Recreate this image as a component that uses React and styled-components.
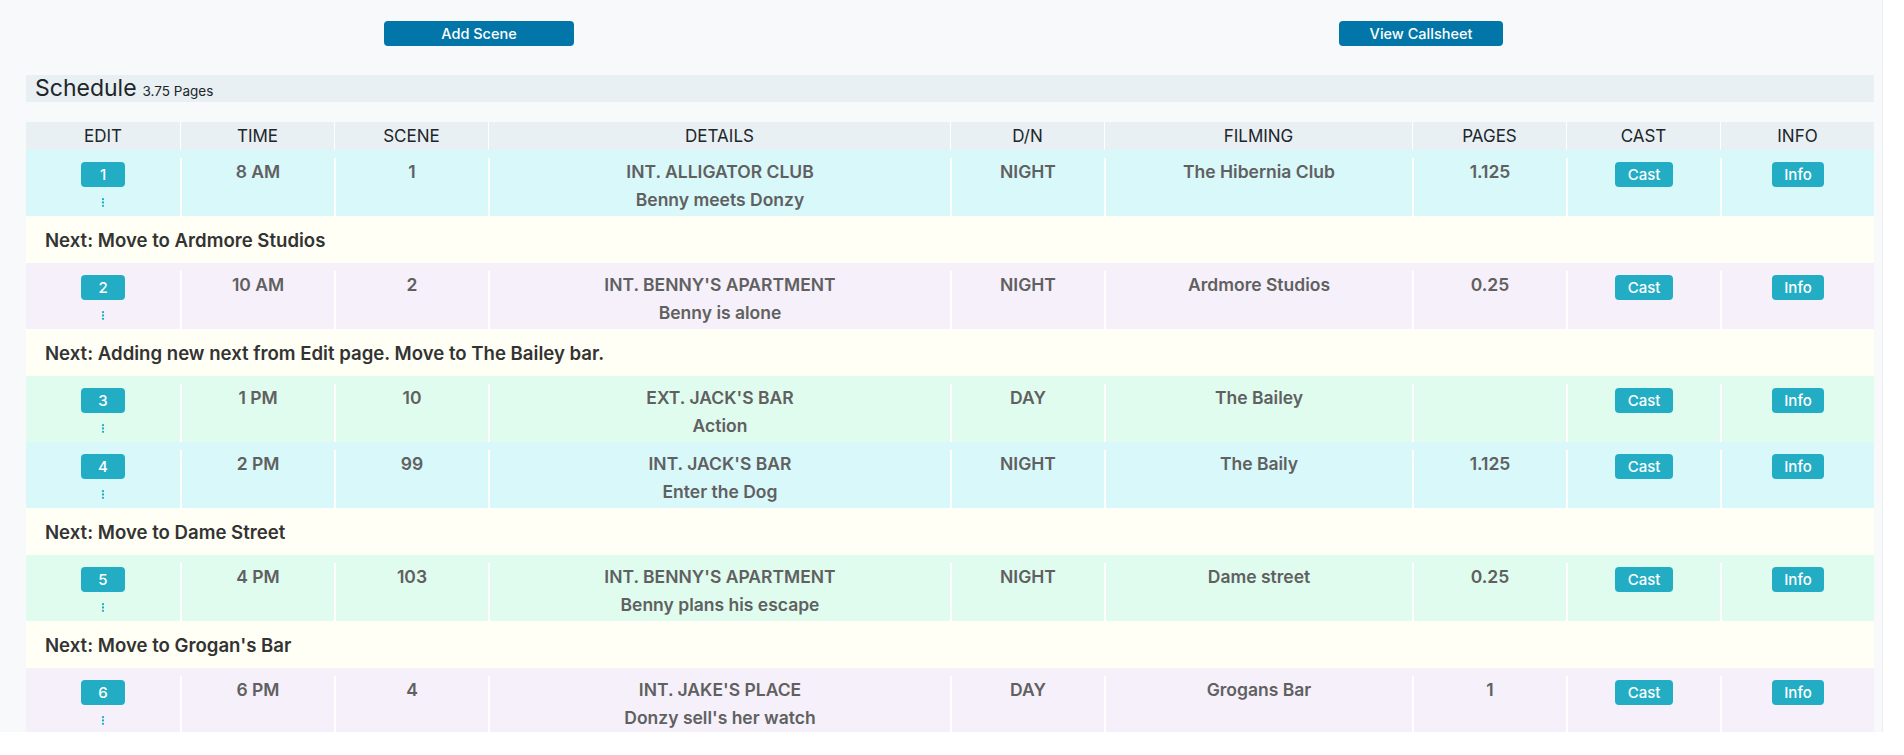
import React from 'react';
import styled, { createGlobalStyle } from 'styled-components';

const GlobalStyle = createGlobalStyle`
  body {
    margin: 0;
    background: #ffffff;
    font-family: Inter, "Noto Sans", sans-serif;
  }
  * { box-sizing: border-box; }
`;

const COLS = '154px 154px 154px 462px 154px 308px 154px 154px 154px';

const ROW_COLORS = {
  cyan: '#d9f8fa',
  lilac: '#f6f0fa',
  mint: '#dffcef',
};

const Page = styled.div`
  width: 1883px;
  height: 732px;
  overflow: hidden;
  background: #f8f9fa;
  border-right: 1px solid #eceef0;
`;

const TopBar = styled.div`
  display: grid;
  grid-template-columns: 942px 942px;
  margin-left: 8px;
  padding-top: 21px;
`;

const TopCell = styled.div`
  display: flex;
  justify-content: center;
`;

const PrimaryButton = styled.button`
  width: ${props => props.w}px;
  height: 25px;
  border: none;
  border-radius: 4px;
  background: #0276a8;
  color: #fff;
  font-family: inherit;
  font-size: 14.5px;
  font-weight: 500;
  cursor: pointer;
`;

const Content = styled.div`
  margin: 29px 0 0 26px;
  width: 1848px;
`;

const SectionBar = styled.div`
  height: 27px;
  background: #e8f0f3;
  display: flex;
  align-items: baseline;
  padding-left: 9px;
  gap: 6px;
  color: #212529;
`;

const SectionTitle = styled.span`
  font-size: 23px;
  line-height: 27px;
`;

const SectionMeta = styled.span`
  font-size: 13.5px;
`;

const Table = styled.div`
  margin-top: 20px;
`;

const HeaderRow = styled.div`
  display: grid;
  grid-template-columns: ${COLS};
  height: 28px;
  background: #e8f0f3;
`;

const HeaderCell = styled.div`
  display: flex;
  align-items: center;
  justify-content: center;
  font-size: 17px;
  color: #212529;
  border-left: ${props => (props.first ? 'none' : '1px solid #ffffff')};
`;

const SceneRow = styled.div`
  display: grid;
  grid-template-columns: ${COLS};
  height: 66px;
  padding-top: 8px;
  background: ${props => ROW_COLORS[props.tone]};
`;

const Cell = styled.div`
  display: flex;
  flex-direction: column;
  align-items: center;
  text-align: center;
  font-size: 17.5px;
  font-weight: 600;
  line-height: 28px;
  color: #606060;
  border-left: ${props => (props.first ? 'none' : '2px solid #ffffff')};
`;

const SmallButton = styled.button`
  height: 25px;
  min-width: ${props => props.w || 0}px;
  margin-top: 4px;
  padding: 0 12px;
  border: none;
  border-radius: 4px;
  background: #23adc4;
  color: #fff;
  font-family: inherit;
  font-size: 15px;
  font-weight: 500;
  line-height: 25px;
  cursor: pointer;
`;

const Handle = styled.svg`
  margin-top: 11px;
  display: block;
`;

const NextRow = styled.div`
  height: 47px;
  display: flex;
  align-items: center;
  padding-left: 19px;
  background: #fffff5;
  font-size: 18.6px;
  font-weight: 600;
  color: #333333;
`;

const headers = ['EDIT', 'TIME', 'SCENE', 'DETAILS', 'D/N', 'FILMING', 'PAGES', 'CAST', 'INFO'];

const rows = [
  { n: 1, time: '8 AM', scene: '1', set: 'INT. ALLIGATOR CLUB', desc: 'Benny meets Donzy', dn: 'NIGHT', loc: 'The Hibernia Club', pages: '1.125', tone: 'cyan', next: 'Next: Move to Ardmore Studios' },
  { n: 2, time: '10 AM', scene: '2', set: "INT. BENNY'S APARTMENT", desc: 'Benny is alone', dn: 'NIGHT', loc: 'Ardmore Studios', pages: '0.25', tone: 'lilac', next: 'Next: Adding new next from Edit page. Move to The Bailey bar.' },
  { n: 3, time: '1 PM', scene: '10', set: "EXT. JACK'S BAR", desc: 'Action', dn: 'DAY', loc: 'The Bailey', pages: '', tone: 'mint' },
  { n: 4, time: '2 PM', scene: '99', set: "INT. JACK'S BAR", desc: 'Enter the Dog', dn: 'NIGHT', loc: 'The Baily', pages: '1.125', tone: 'cyan', next: 'Next: Move to Dame Street' },
  { n: 5, time: '4 PM', scene: '103', set: "INT. BENNY'S APARTMENT", desc: 'Benny plans his escape', dn: 'NIGHT', loc: 'Dame street', pages: '0.25', tone: 'mint', next: "Next: Move to Grogan's Bar" },
  { n: 6, time: '6 PM', scene: '4', set: "INT. JAKE'S PLACE", desc: "Donzy sell's her watch", dn: 'DAY', loc: 'Grogans Bar', pages: '1', tone: 'lilac' },
];

function DragHandle() {
  return (
    <Handle width="4" height="9" viewBox="0 0 4 9">
      <circle cx="2" cy="1.2" r="1.15" fill="#23adc4" />
      <circle cx="2" cy="4.5" r="1.15" fill="#23adc4" />
      <circle cx="2" cy="7.8" r="1.15" fill="#23adc4" />
    </Handle>
  );
}

function App() {
  return (
    <>
      <GlobalStyle />
      <Page>
        <TopBar>
          <TopCell>
            <PrimaryButton w={190}>Add Scene</PrimaryButton>
          </TopCell>
          <TopCell>
            <PrimaryButton w={164}>View Callsheet</PrimaryButton>
          </TopCell>
        </TopBar>
        <Content>
          <SectionBar>
            <SectionTitle>Schedule</SectionTitle>
            <SectionMeta>3.75 Pages</SectionMeta>
          </SectionBar>
          <Table>
            <HeaderRow>
              {headers.map((h, i) => (
                <HeaderCell key={h} first={i === 0}>{h}</HeaderCell>
              ))}
            </HeaderRow>
            {rows.map(r => (
              <React.Fragment key={r.n}>
                <SceneRow tone={r.tone}>
                  <Cell first>
                    <SmallButton w={44}>{r.n}</SmallButton>
                    <DragHandle />
                  </Cell>
                  <Cell>{r.time}</Cell>
                  <Cell>{r.scene}</Cell>
                  <Cell>
                    <span>{r.set}</span>
                    <span>{r.desc}</span>
                  </Cell>
                  <Cell>{r.dn}</Cell>
                  <Cell>{r.loc}</Cell>
                  <Cell>{r.pages}</Cell>
                  <Cell>
                    <SmallButton w={58}>Cast</SmallButton>
                  </Cell>
                  <Cell>
                    <SmallButton w={52}>Info</SmallButton>
                  </Cell>
                </SceneRow>
                {r.next && <NextRow>{r.next}</NextRow>}
              </React.Fragment>
            ))}
          </Table>
        </Content>
      </Page>
    </>
  );
}

export default App;
